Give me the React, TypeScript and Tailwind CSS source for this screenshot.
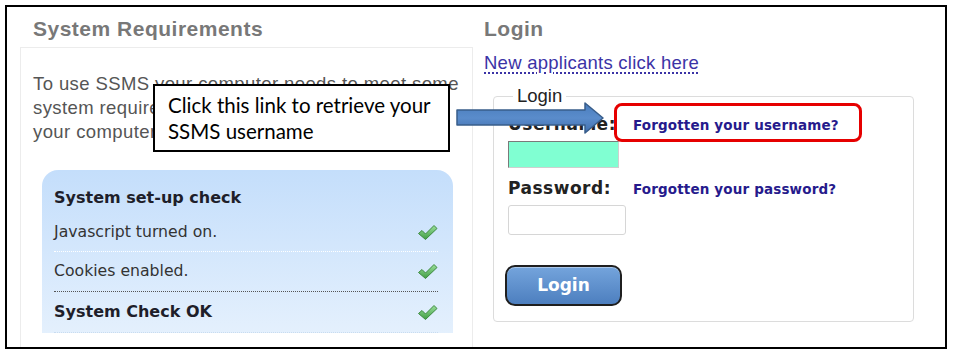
import React from 'react';

function Check() {
  return (
    <svg width="21" height="17" viewBox="0 0 21 17" className="shrink-0">
      <defs>
        <linearGradient id="chk" x1="0" y1="0" x2="0" y2="1">
          <stop offset="0" stopColor="#9be09b" />
          <stop offset="1" stopColor="#3f9c43" />
        </linearGradient>
      </defs>
      <path
        d="M1.5 9.5 L5 6.5 L8.5 10 L17 1.5 L20 4.5 L8.5 15.5 Z"
        fill="url(#chk)"
        stroke="#3d8a40"
        strokeWidth="1"
        strokeLinejoin="round"
      />
    </svg>
  );
}

export default function App() {
  const sans = { fontFamily: '"Liberation Sans", Arial, sans-serif' };
  const verd = { fontFamily: '"DejaVu Sans", Verdana, sans-serif' };

  return (
    <div className="w-[953px] h-[358px] bg-white pt-[5px] pl-[5px]" style={sans}>
      <div className="relative w-[942px] h-[344px] border-2 border-black bg-white flex overflow-hidden">
        {/* System requirements */}
        <div className="ml-[13px] w-[453px] shrink-0 flex flex-col">
          <h2 className="pl-[13px] pt-[11px] text-[21px] leading-[22px] tracking-[0.5px] font-bold text-[#787878]">System Requirements</h2>
          <div className="mt-[7px] flex-1 border-t border-x border-[#ececec]">
            <p className="pl-[12px] mt-[24px] text-[18.5px] leading-[24px] tracking-[0.4px] text-[#555]">
              To use SSMS your computer needs to meet some
              <br />
              system requirements. Your results for
              <br />
              your computer are shown below.
            </p>
            <div
              className="ml-[21px] mt-[26px] w-[411px] h-[163px] rounded-t-[16px] bg-gradient-to-b from-[#c4defb] to-[#e4f0fd] pl-[12px] pr-[15px]"
              style={verd}
            >
              <div className="pt-[18px] text-[16px] leading-[20px] font-bold text-[#1e1e2a]">System set-up check</div>
              <div className="mt-[14px] pb-[9px] flex items-center justify-between border-b border-dotted border-white text-[15.7px] leading-[20px] text-[#333]">
                <span>Javascript turned on.</span>
                <Check />
              </div>
              <div className="pt-[9px] pb-[10px] flex items-center justify-between border-b border-dotted border-[#555] text-[15.7px] leading-[20px] text-[#333]">
                <span>Cookies enabled.</span>
                <Check />
              </div>
              <div className="pt-[10px] pb-[10px] flex items-center justify-between border-b border-dotted border-[#c9dcf0] text-[16px] leading-[20px] font-bold text-[#1e1e2a]">
                <span>System Check OK</span>
                <Check />
              </div>
            </div>
          </div>
        </div>

        {/* Login */}
        <div className="ml-[11px] flex flex-col">
          <h2 className="pt-[11px] text-[21px] leading-[22px] tracking-[0.5px] font-bold text-[#787878]">Login</h2>
          <a className="mt-[11px] self-start text-[18.5px] leading-[24px] tracking-[0.25px] text-[#3b33a6] underline decoration-dotted underline-offset-[4px]">
            New applicants click here
          </a>
          <fieldset className="mt-[12px] ml-[9px] w-[421px] border border-[#dcdcdc] rounded-[4px] pl-[14px] pb-[15px]">
            <legend className="ml-[5px] px-[4px] text-[18.5px] leading-[18px] text-[#222]">Login</legend>
            <div className="mt-[9px] flex items-baseline gap-[17px] leading-[20px]" style={verd}>
              <span className="text-[17px] tracking-[0.5px] font-bold text-[#222]">Username:</span>
              <span className="text-[13.5px] tracking-[0.15px] font-bold text-[#261a8c]">Forgotten your username?</span>
            </div>
            <div className="mt-[6px] w-[111px] h-[27px] bg-[#80ffd2] border border-t-[#7a7a7a] border-l-[#7a7a7a] border-b-[#cfcfcf] border-r-[#cfcfcf]" />
            <div className="mt-[10px] flex items-baseline gap-[22px] leading-[20px]" style={verd}>
              <span className="text-[17px] tracking-[0.5px] font-bold text-[#222]">Password:</span>
              <span className="text-[13.5px] tracking-[0.15px] font-bold text-[#261a8c]">Forgotten your password?</span>
            </div>
            <div className="mt-[6px] w-[118px] h-[30px] bg-white border border-[#d6d6d6] rounded-[3px]" />
            <button
              className="mt-[30px] -ml-[3px] w-[117px] h-[41px] rounded-[10px] border-2 border-[#1f1f1f] bg-gradient-to-b from-[#74a4dc] to-[#4d7fbf] text-white text-[17px] font-bold shadow-[inset_0_1px_0_rgba(255,255,255,0.4)]"
              style={verd}
            >
              Login
            </button>
          </fieldset>
        </div>

        {/* Callout */}
        <div className="absolute left-[146px] top-[77px] w-[297px] h-[68px] border-2 border-black bg-white pl-[13px] pt-[6px] text-[20.5px] leading-[26px] text-black" style={{ fontFamily: 'Lato, "Open Sans", sans-serif' }}>
          Click this link to retrieve your
          <br />
          SSMS username
        </div>

        {/* Arrow */}
        <svg className="absolute left-[449px] top-[95px]" width="150" height="34" viewBox="0 0 150 34">
          <defs>
            <linearGradient id="arr" x1="0" y1="0" x2="0" y2="1">
              <stop offset="0" stopColor="#4a7dbd" />
              <stop offset="0.5" stopColor="#5a8ccb" />
              <stop offset="1" stopColor="#416fae" />
            </linearGradient>
          </defs>
          <path d="M1 8 L129 8 L129 1 L147 16 L129 31 L129 23 L1 23 Z" fill="url(#arr)" stroke="#385d8a" strokeWidth="1.5" strokeLinejoin="round" />
        </svg>

        {/* Highlight */}
        <div className="absolute left-[607px] top-[96px] w-[248px] h-[39px] border-[3px] border-[#e60000] rounded-[8px]" />
      </div>
    </div>
  );
}
